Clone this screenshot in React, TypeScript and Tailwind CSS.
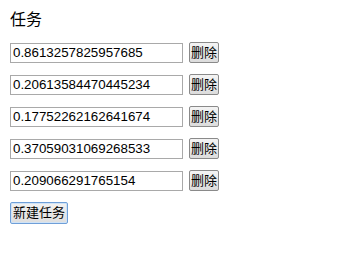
import { useState } from 'react';

const initialTasks = [
  '0.8613257825957685',
  '0.20613584470445234',
  '0.17752262162641674',
  '0.37059031069268533',
  '0.209066291765154',
];

export default function App() {
  const [tasks, setTasks] = useState<string[]>(initialTasks);

  const removeTask = (index: number) => {
    setTasks((prev) => prev.filter((_, i) => i !== index));
  };

  const addTask = () => {
    setTasks((prev) => [...prev, String(Math.random())]);
  };

  return (
    <main className="min-h-[268px] bg-white pl-[10px] pt-[12px] text-black font-['Liberation_Sans','Noto_Sans_CJK_SC',sans-serif]">
      <h3 className="text-[16px] leading-[16px]">任务</h3>

      <div className="mt-[14px] flex flex-col gap-[11px]">
        {tasks.map((task, i) => (
          <div key={i} className="flex items-center gap-[6px]">
            <input
              defaultValue={task}
              className="h-[20px] w-[173px] border border-[#a9a9a9] bg-white px-[2px] text-[13.33px] leading-[16px] text-black outline-none"
            />
            <button
              onClick={() => removeTask(i)}
              className="h-[21px] w-[30px] rounded-[2px] border border-[#8a8a8a] bg-gradient-to-b from-[#f4f4f4] to-[#dcdcdc] p-0 text-[13px] leading-[19px] text-black"
            >
              删除
            </button>
          </div>
        ))}
      </div>

      <button
        onClick={addTask}
        className="mt-[11px] h-[22px] w-[58px] rounded-[2px] border border-[#6f9fd8] bg-gradient-to-b from-[#f2f2f2] to-[#dedede] p-0 text-[13px] leading-[20px] text-black shadow-[inset_0_0_0_1px_#cfe3f7]"
      >
        新建任务
      </button>
    </main>
  );
}
